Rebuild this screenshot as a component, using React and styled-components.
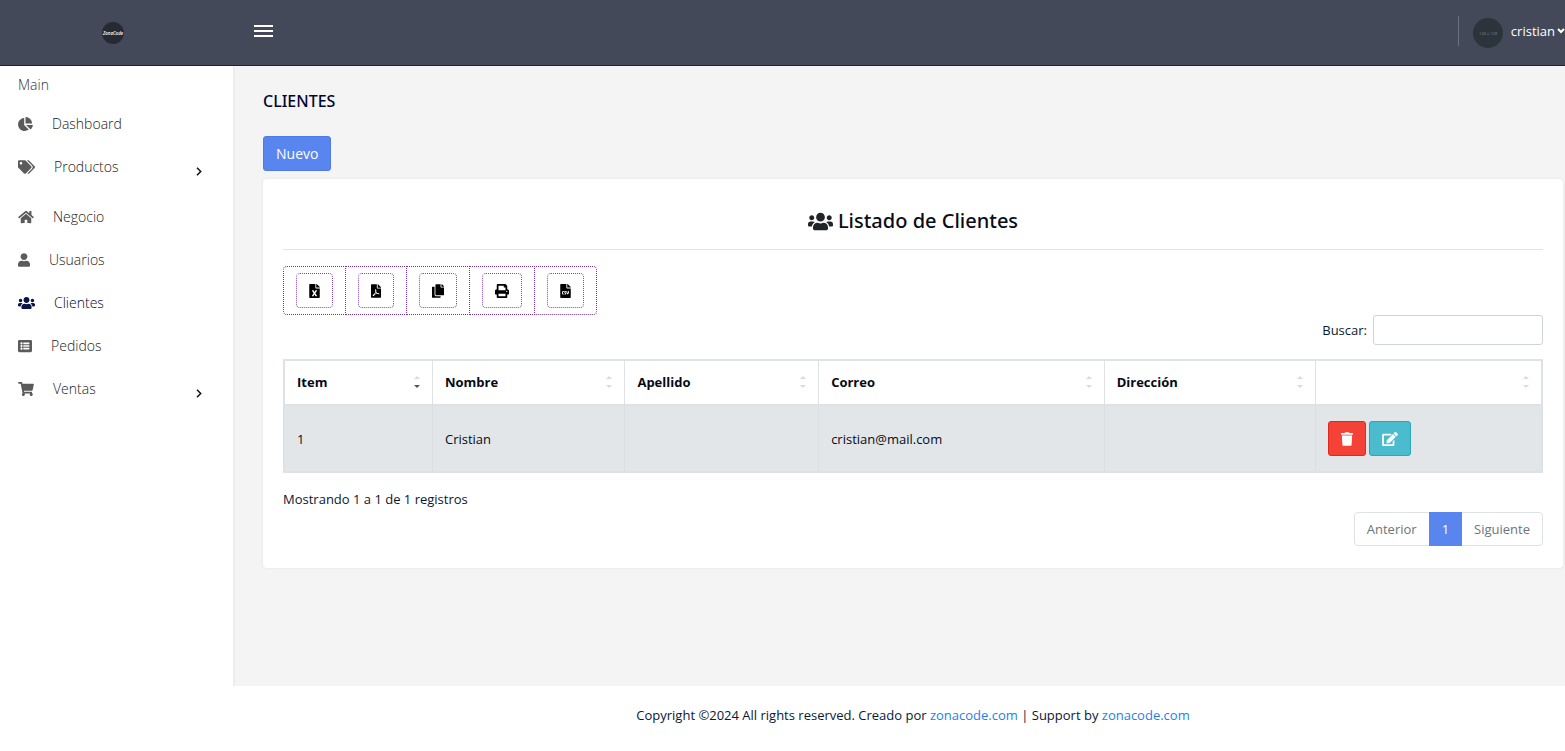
import React from "react";
import styled, { createGlobalStyle, css } from "styled-components";
import {
	FaChartPie,
	FaCopy,
	FaEdit,
	FaFileCsv,
	FaFileExcel,
	FaFilePdf,
	FaHome,
	FaListAlt,
	FaPrint,
	FaShoppingCart,
	FaTags,
	FaTrash,
	FaUser,
	FaUsers,
} from "react-icons/fa";

const GlobalStyle = createGlobalStyle`
	* {
		box-sizing: border-box;
	}
	body {
		margin: 0;
		background: #f4f4f4;
		color: #0a1832;
		font-family: "Open Sans", "Noto Sans", sans-serif;
		font-size: 13px;
		line-height: 20px;
	}
	button, input {
		font: inherit;
		color: inherit;
		margin: 0;
	}
	a {
		text-decoration: none;
	}
	svg {
		display: block;
	}
`;

const Page = styled.div`
	display: flex;
	flex-direction: column;
	min-height: 100vh;
`;

const TopBar = styled.header`
	display: flex;
	align-items: center;
	height: 66px;
	background: #444959;
	border-bottom: 1px solid #18233f;
	color: #fff;
`;

const Brand = styled.a`
	display: flex;
	justify-content: center;
	width: 226px;
`;

const MenuToggle = styled.button`
	display: flex;
	flex-direction: column;
	gap: 3px;
	width: 19px;
	margin: 0 auto 4px 28px;
	padding: 0;
	border: 0;
	background: none;
	cursor: pointer;
`;

const ToggleBar = styled.span`
	height: 2px;
	background: #fff;
`;

const UserMenu = styled.button`
	display: flex;
	align-items: center;
	padding: 0;
	border: 0;
	background: none;
	cursor: pointer;
`;

const Divider = styled.span`
	width: 1px;
	height: 30px;
	margin: 0 14px 4px 0;
	background: #6d7280;
`;

const UserName = styled.span`
	margin: 0 2px 4px 8px;
`;

const Body = styled.div`
	display: flex;
	flex: 1;
`;

const Sidebar = styled.nav`
	flex: none;
	width: 233px;
	background: #fff;
	box-shadow: 1px 0 3px rgba(0, 0, 0, 0.06);
	font-size: 14px;
`;

const SidebarTitle = styled.div`
	padding: 9px 18px 7px;
	color: #333;
	font-size: 14px;
	font-weight: 300;
`;

const MenuList = styled.ul`
	margin: 0;
	padding: 0;
	list-style: none;
`;

const MenuItem = styled.li`
	padding-bottom: ${(props) => (props.$expandable ? 7 : 0)}px;
`;

const MenuLink = styled.a`
	display: flex;
	align-items: center;
	height: 43px;
	padding: 0 31px 0 18px;
	color: ${(props) => (props.$active ? "#00072e" : "#222")};
	font-weight: 300;
	> svg {
		color: ${(props) => (props.$active ? "#0a1445" : "#5b5b5b")};
	}
`;

const MenuLabel = styled.span`
	flex: 1;
	margin-left: 19px;
`;

const Content = styled.div`
	display: flex;
	flex: 1;
	flex-direction: column;
	min-width: 0;
`;

const Main = styled.main`
	flex: 1;
	padding: 25px 2px 24px 30px;
`;

const PageTitle = styled.h1`
	margin: 0 0 25px;
	font-family: "Noto Sans", "Open Sans", sans-serif;
	font-size: 16px;
	font-weight: 500;
	line-height: 20px;
	color: #00072e;
`;

const Button = styled.button`
	display: inline-flex;
	align-items: center;
	height: 35px;
	padding: 0 12px;
	border: 1px solid ${(props) => props.$border};
	border-radius: 3px;
	background: ${(props) => props.$color};
	color: #fff;
	font-size: 14px;
	cursor: pointer;
`;

const Card = styled.section`
	margin-top: 8px;
	padding: 20px 20px 22px;
	border-radius: 4px;
	background: #fff;
	box-shadow: 0 0 3px rgba(0, 0, 0, 0.08);
`;

const CardTitle = styled.h2`
	display: flex;
	align-items: center;
	justify-content: center;
	gap: 5px;
	margin: 0;
	padding: 8px 0 14px;
	border-bottom: 1px solid #e3e3e3;
	color: #0b0d14;
	font-family: "Noto Sans", "Open Sans", sans-serif;
	font-size: 20px;
	font-weight: 500;
	line-height: 28px;
	> svg {
		color: #212529;
	}
`;

const ExportGroup = styled.div`
	display: flex;
	width: fit-content;
	margin-top: 16px;
	color: #000;
`;

const ExportButton = styled.button`
	padding: 6px 12px;
	border: 1px dotted #7a2fa5;
	background: #fff;
	cursor: pointer;
	& + & {
		margin-left: -1px;
	}
	&:first-child {
		border-radius: 4px 0 0 4px;
	}
	&:last-child {
		border-radius: 0 4px 4px 0;
	}
`;

const ExportIcon = styled.span`
	display: flex;
	align-items: center;
	height: 35px;
	padding: 0 12px;
	border: 1px dotted #8a44b4;
	border-radius: 4px;
`;

const SearchLabel = styled.label`
	display: flex;
	align-items: center;
	justify-content: flex-end;
	gap: 6px;
`;

const SearchInput = styled.input`
	width: 170px;
	height: 30px;
	padding: 4px 8px;
	border: 1px solid #ced4da;
	border-radius: 3px;
	background: #fff;
`;

const ClientTable = styled.table`
	width: 100%;
	margin-top: 14px;
	border: 2px solid #dee2e6;
	border-collapse: collapse;
	table-layout: fixed;
	color: #060a16;
`;

const Column = styled.col`
	width: ${(props) => props.$width}%;
`;

const HeadCell = styled.th`
	height: 45px;
	padding: 0 12px 2px;
	border: 1px solid #dee2e6;
	border-bottom-width: 2px;
	text-align: left;
	font-weight: 700;
`;

const SortButton = styled.button`
	display: flex;
	align-items: center;
	justify-content: space-between;
	width: 100%;
	padding: 0;
	border: 0;
	background: none;
	cursor: pointer;
`;

const Cell = styled.td`
	height: 67px;
	padding: 0 12px;
	border: 1px solid #dbdfe2;
	background: #e2e6e9;
`;

const Actions = styled.div`
	display: flex;
	gap: 3px;
`;

const TableInfo = styled.p`
	margin: 16px 0 3px;
`;

const Pagination = styled.nav`
	display: flex;
	justify-content: flex-end;
`;

const PageButton = styled.button`
	height: 34px;
	padding: 0 12px;
	border: 1px solid #dee2e6;
	background: #fff;
	color: #6c757d;
	cursor: pointer;
	& + & {
		margin-left: -1px;
	}
	&:first-child {
		border-radius: 4px 0 0 4px;
	}
	&:last-child {
		border-radius: 0 4px 4px 0;
	}
	${(props) =>
		props.$active &&
		css`
			position: relative;
			border-color: #5985ee;
			background: #5985ee;
			color: #fff;
		`}
`;

const Footer = styled.footer`
	padding: 19px 2px 26px 30px;
	background: #fff;
	text-align: center;
`;

const FooterLink = styled.a`
	color: #1b82ec;
`;

const menu = [
	{ label: "Dashboard", icon: FaChartPie, width: 15 },
	{ label: "Productos", icon: FaTags, width: 17, expandable: true },
	{ label: "Negocio", icon: FaHome, width: 16 },
	{ label: "Usuarios", icon: FaUser, width: 12 },
	{ label: "Clientes", icon: FaUsers, width: 17, active: true },
	{ label: "Pedidos", icon: FaListAlt, width: 14 },
	{ label: "Ventas", icon: FaShoppingCart, width: 16, expandable: true },
];

const exportsList = [
	{ label: "Excel", icon: FaFileExcel, width: 11 },
	{ label: "PDF", icon: FaFilePdf, width: 10 },
	{ label: "Copiar", icon: FaCopy, width: 12 },
	{ label: "Imprimir", icon: FaPrint, width: 14 },
	{ label: "CSV", icon: FaFileCsv, width: 11 },
];

const columns = [
	{ label: "Item", width: 11.8, sorted: true },
	{ label: "Nombre", width: 15.3 },
	{ label: "Apellido", width: 15.4 },
	{ label: "Correo", width: 22.7 },
	{ label: "Dirección", width: 16.8 },
	{ label: "", width: 18 },
];

const Logo = () => (
	<svg width="22" height="22" viewBox="0 0 22 22">
		<circle cx="11" cy="11" r="11" fill="#262a33" />
		<text
			x="11"
			y="12.5"
			textAnchor="middle"
			fill="#fff"
			fontSize="4.4"
			fontWeight="600"
			fontStyle="italic"
			fontFamily="Open Sans, sans-serif"
		>
			ZonaCode
		</text>
	</svg>
);

const Avatar = () => (
	<svg width="30" height="30" viewBox="0 0 30 30">
		<circle cx="15" cy="15" r="15" fill="#2b333b" />
		<text
			x="15"
			y="17"
			textAnchor="middle"
			fill="#7b838b"
			fontSize="4"
			fontFamily="Open Sans, sans-serif"
		>
			128 x 128
		</text>
	</svg>
);

const ChevronHolder = styled.span`
	padding: ${(props) => (props.$down ? "0 0 4px" : "9px 0 0")};
`;

const ChevronDown = () => (
	<ChevronHolder $down>
		<svg width="8" height="6" viewBox="0 0 8 6">
			<path d="M1 1l3 3 3-3" fill="none" stroke="#fff" strokeWidth="2" />
		</svg>
	</ChevronHolder>
);

const ChevronRight = () => (
	<ChevronHolder>
		<svg width="6" height="9" viewBox="0 0 6 9">
			<path d="M1 .8l3.7 3.7L1 8.2" fill="none" stroke="#111" strokeWidth="1.5" />
		</svg>
	</ChevronHolder>
);

const SortArrows = ({ sorted }) => (
	<svg width="6" height="12" viewBox="0 0 6 12">
		<path d="M3 0l3 3H0z" fill="#dcdcdc" />
		<path d="M3 12L0 9h6z" fill={sorted ? "#50555c" : "#dcdcdc"} />
	</svg>
);

const App = () => (
	<Page>
		<GlobalStyle />
		<TopBar>
			<Brand href="#" aria-label="ZonaCode">
				<Logo />
			</Brand>
			<MenuToggle type="button" aria-label="Menu">
				<ToggleBar />
				<ToggleBar />
				<ToggleBar />
			</MenuToggle>
			<UserMenu type="button">
				<Divider />
				<Avatar />
				<UserName>cristian</UserName>
				<ChevronDown />
			</UserMenu>
		</TopBar>
		<Body>
			<Sidebar>
				<SidebarTitle>Main</SidebarTitle>
				<MenuList>
					{menu.map(({ label, icon: Icon, width, expandable, active }) => (
						<MenuItem key={label} $expandable={expandable}>
							<MenuLink href="#" $active={active}>
								<Icon size={14} style={{ width }} />
								<MenuLabel>{label}</MenuLabel>
								{expandable && <ChevronRight />}
							</MenuLink>
						</MenuItem>
					))}
				</MenuList>
			</Sidebar>
			<Content>
				<Main>
					<PageTitle>CLIENTES</PageTitle>
					<Button type="button" $color="#5985ee" $border="#4d7be8">
						Nuevo
					</Button>
					<Card>
						<CardTitle>
							<FaUsers size={25} />
							Listado de Clientes
						</CardTitle>
						<ExportGroup>
							{exportsList.map(({ label, icon: Icon, width }) => (
								<ExportButton key={label} type="button" aria-label={label}>
									<ExportIcon>
										<Icon size={14} style={{ width }} />
									</ExportIcon>
								</ExportButton>
							))}
						</ExportGroup>
						<SearchLabel>
							Buscar:
							<SearchInput type="search" />
						</SearchLabel>
						<ClientTable>
							<colgroup>
								{columns.map(({ label, width }) => (
									<Column key={label} $width={width} />
								))}
							</colgroup>
							<thead>
								<tr>
									{columns.map(({ label, sorted }) => (
										<HeadCell key={label} scope="col">
											<SortButton type="button" aria-label={label || "Acciones"}>
												<span>{label}</span>
												<SortArrows sorted={sorted} />
											</SortButton>
										</HeadCell>
									))}
								</tr>
							</thead>
							<tbody>
								<tr>
									<Cell>1</Cell>
									<Cell>Cristian</Cell>
									<Cell />
									<Cell>cristian@mail.com</Cell>
									<Cell />
									<Cell>
										<Actions>
											<Button
												type="button"
												aria-label="Eliminar"
												$color="#f44336"
												$border="#dc2a1c"
											>
												<FaTrash size={14} style={{ width: 12 }} />
											</Button>
											<Button
												type="button"
												aria-label="Editar"
												$color="#4bbbce"
												$border="#2fa5b9"
											>
												<FaEdit size={14} style={{ width: 16 }} />
											</Button>
										</Actions>
									</Cell>
								</tr>
							</tbody>
						</ClientTable>
						<TableInfo>Mostrando 1 a 1 de 1 registros</TableInfo>
						<Pagination aria-label="Paginación">
							<PageButton type="button">Anterior</PageButton>
							<PageButton type="button" $active>
								1
							</PageButton>
							<PageButton type="button">Siguiente</PageButton>
						</Pagination>
					</Card>
				</Main>
				<Footer>
					Copyright ©2024 All rights reserved. Creado por{" "}
					<FooterLink href="#">zonacode.com</FooterLink> | Support by{" "}
					<FooterLink href="#">zonacode.com</FooterLink>
				</Footer>
			</Content>
		</Body>
	</Page>
);

export default App;
